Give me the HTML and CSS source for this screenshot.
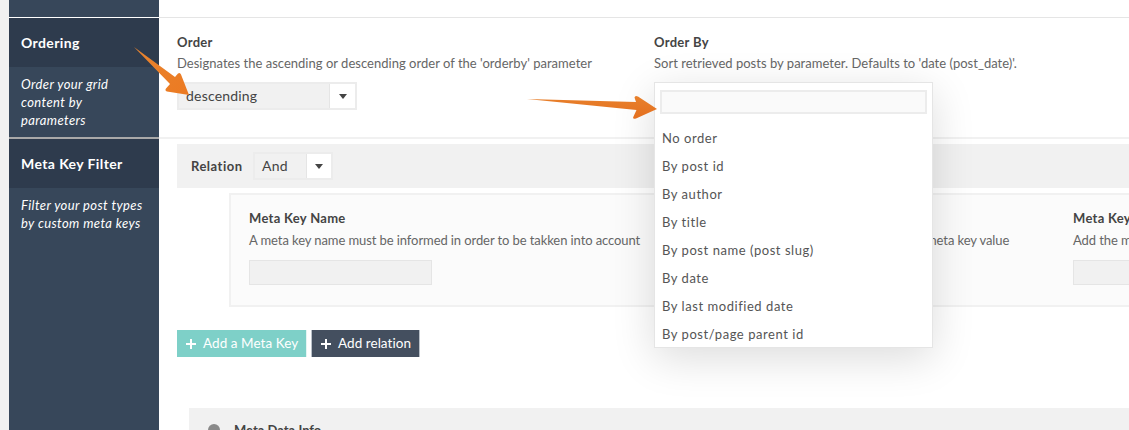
FILE: index.html
```html
<!DOCTYPE html>
<html lang="en">
<head>
    <meta charset="UTF-8">
    <title>Grid settings</title>
    <link rel="stylesheet" href="styles.css">
</head>
<body>
    <div class="page">
        <aside class="sidebar">
            <div class="side-top"></div>
            <div class="side-item">
                <h3>Ordering</h3>
                <p>Order your grid content by parameters</p>
            </div>
            <div class="side-item second">
                <h3>Meta Key Filter</h3>
                <p>Filter your post types by custom meta keys</p>
            </div>
        </aside>

        <main class="content">
            <div class="content-top"></div>

            <section class="ordering">
                <div class="field">
                    <label>Order</label>
                    <div class="hint">Designates the ascending or descending order of the 'orderby' parameter</div>
                    <div class="select order-select">
                        <span class="select-value">descending</span>
                        <span class="select-caret"></span>
                    </div>
                </div>
                <div class="field">
                    <label>Order By</label>
                    <div class="hint">Sort retrieved posts by parameter. Defaults to 'date (post_date)'.</div>
                </div>
            </section>

            <section class="meta-filter">
                <div class="relation">
                    <label>Relation</label>
                    <div class="select relation-select">
                        <span class="select-value">And</span>
                        <span class="select-caret"></span>
                    </div>
                </div>

                <div class="meta-box">
                    <div class="meta-col">
                        <label>Meta Key Name</label>
                        <div class="hint">A meta key name must be informed in order to be takken into account</div>
                        <div class="text-input"></div>
                    </div>
                    <div class="meta-col">
                        <label>Meta Key Compare</label>
                        <div class="hint">Operator used to test the posts against a given meta key value</div>
                        <div class="text-input"></div>
                    </div>
                    <div class="meta-col">
                        <label>Meta Key Value</label>
                        <div class="hint">Add the meta key value to compare against</div>
                        <div class="text-input"></div>
                    </div>
                </div>

                <div class="actions">
                    <button class="btn btn-teal"><span class="plus"></span>Add a Meta Key</button>
                    <button class="btn btn-dark"><span class="plus"></span>Add relation</button>
                </div>
            </section>

            <section class="info-bar">
                <svg class="info-icon" width="16" height="22" viewBox="0 0 16 22"><circle cx="8" cy="7" r="6" fill="#8a8a8a"/></svg>
                <span>Meta Data Info</span>
            </section>
        </main>

        <!-- dropdown open over the form -->
        <div class="dropdown">
            <div class="dropdown-search"></div>
            <ul>
                <li>No order</li>
                <li>By post id</li>
                <li>By author</li>
                <li>By title</li>
                <li>By post name (post slug)</li>
                <li>By date</li>
                <li>By last modified date</li>
                <li>By post/page parent id</li>
            </ul>
        </div>

        <!-- annotation arrows -->
        <svg class="arrows" width="1129" height="430" viewBox="0 0 1129 430">
            <defs>
                <linearGradient id="arrow-a" x1="0" y1="0" x2="1" y2="1">
                    <stop offset="0" stop-color="#e8842f"/>
                    <stop offset="1" stop-color="#ec7a22"/>
                </linearGradient>
                <linearGradient id="arrow-b" x1="0" y1="0" x2="0" y2="1">
                    <stop offset="0" stop-color="#e8812c"/>
                    <stop offset="1" stop-color="#e46f1f"/>
                </linearGradient>
            </defs>
            <path d="M134 47 L175 77 L178 73.5 Q180 72 181 74.5 L189 95 L167 91.5 Q164.5 90.5 166 88.5 L170 84 Z" fill="url(#arrow-a)"/>
            <path d="M527 99 L636 102 L634.5 97.5 Q635 95 638 96.5 L657 109 L636 118.5 Q632 119.5 633.5 116.5 L636.5 110 Z" fill="url(#arrow-b)"/>
        </svg>
    </div>
</body>
</html>
```

FILE: styles.css
```css
* { box-sizing: border-box; margin: 0; padding: 0; }
html, body { height: 100%; overflow: hidden; }
body { background: #fff; color: #444; font-family: "Lato", sans-serif; font-size: 13px; }

.page { position: relative; display: flex; width: 1129px; height: 430px; overflow: hidden; padding-left: 9px; background: linear-gradient(to right, #f1f1f1 9px, #fff 9px); }

/* left column */
.sidebar { flex: 0 0 150px; background: #37475a; color: #fff; }
.side-top { height: 18px; border-bottom: 1px solid #fff; }
.side-item h3 { height: 49px; padding-top: 14px; padding-left: 12px; background: #2e3b4d; font-size: 14px; font-weight: 700; line-height: 22px; letter-spacing: 0.4px; }
.side-item p { height: 70px; padding: 8px 13px 0 12px; font-size: 13px; font-style: italic; line-height: 18px; letter-spacing: 0.4px; }
.side-item.second { border-top: 2px solid #a9a9a9; }

/* form */
.content { flex: 1; min-width: 0; }
.content-top { height: 18px; border-bottom: 1px solid #e5e5e5; }
label { display: block; font-size: 13px; font-weight: 700; color: #444; line-height: 18px; letter-spacing: 0.3px; }
.hint { margin-top: 3px; font-size: 13px; color: #666; line-height: 18px; white-space: nowrap; letter-spacing: 0.02px; }

.ordering { display: flex; height: 121px; padding: 15px 0 0 18px; border-bottom: 2px solid #f1f1f1; }
.field { flex: 0 0 477px; }

.select { display: flex; height: 28px; border: 2px solid #ececec; background: #fff; font-size: 14px; color: #444; letter-spacing: 0.2px; }
.select-value { background: #f1f1f1; border-right: 1px solid #e5e5e5; line-height: 24px; }
.select-caret { flex: 1; position: relative; }
.select-caret::after { content: ""; position: absolute; left: 50%; top: 10px; margin-left: -4px; border-left: 4px solid transparent; border-right: 4px solid transparent; border-top: 5px solid #444; }
.order-select { width: 180px; margin-top: 10px; }
.order-select .select-value { width: 151px; padding-left: 7px; }
.relation-select { width: 80px; }
.relation-select .select-value { width: 52px; padding-left: 7px; }

.meta-filter { padding: 5px 0 0 18px; }
.relation { display: flex; align-items: center; gap: 10px; height: 44px; padding-left: 14px; background: #f1f1f1; }
.relation label { width: 52px; letter-spacing: 0.5px; }

.meta-box { display: flex; width: 1300px; height: 114px; margin: 5px 0 0 52px; padding: 14px 0 0 18px; background: #fbfbfb; border: 2px solid #f1f1f1; }
.meta-col { flex: 0 0 412px; }
.meta-col .hint { margin-top: 4px; letter-spacing: -0.09px; }
.text-input { width: 183px; height: 25px; margin-top: 11px; background: #f1f1f1; border: 1px solid #e5e5e5; }

.actions { display: flex; gap: 4px; margin-top: 23px; }
.btn { display: flex; align-items: center; height: 27px; padding-bottom: 2px; border: none; border-right: 1px solid #b9c0c8; color: #fff; font-family: inherit; font-size: 13.5px; font-weight: 400; letter-spacing: 0.05px; }
.btn-teal { width: 130px; padding-left: 9px; background: #7ed0c8; border-right-color: #e4f5f3; }
.btn-dark { width: 109px; padding-left: 9px; background: #444f5f; border-left: 1px solid #b9c0c8; }
.plus { position: relative; width: 10px; height: 10px; margin-top: 2px; margin-right: 7px; background: linear-gradient(#fff, #fff) center / 10px 2px no-repeat, linear-gradient(#fff, #fff) center / 2px 10px no-repeat; }

.info-bar { display: flex; gap: 12px; width: 1000px; height: 40px; margin: 51px 0 0 30px; padding: 14px 0 0 17px; background: #f1f1f1; font-size: 13px; font-weight: 700; color: #444; }
.info-icon { flex: none; margin-top: 1px; }

/* open select list */
.dropdown { position: absolute; left: 654px; top: 82px; width: 279px; height: 266px; background: #fff; border: 1px solid #e5e5e5; box-shadow: 0 10px 40px rgba(0,0,0,0.14); }
.dropdown-search { width: 267px; height: 24px; margin: 7px 0 0 5px; background: #fafafa; border: 2px solid #ececec; }
.dropdown ul { margin-top: 10px; list-style: none; }
.dropdown li { height: 28px; padding-left: 7px; font-size: 13px; color: #555; line-height: 28px; letter-spacing: 0.55px; }

.arrows { position: absolute; left: 0; top: 0; pointer-events: none; }
```
